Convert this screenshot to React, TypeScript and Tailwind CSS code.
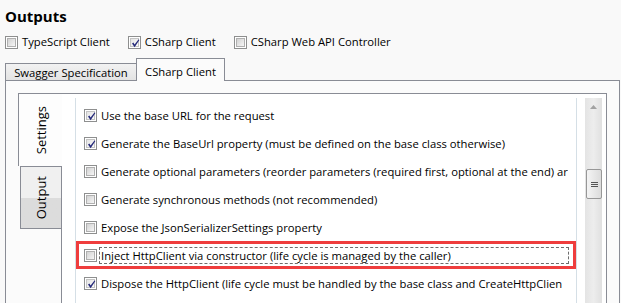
import React from "react";

function Check() {
  return (
    <svg className="absolute left-0 top-0 h-[13px] w-[13px]" viewBox="0 0 13 13">
      <path d="M3 6.6 L4.4 5.6 L5.6 7.6 L9.4 2.4 L10.4 3.1 L5.6 10.2 Z" fill="#252a7a" />
    </svg>
  );
}

function Box({ checked }: { checked?: boolean }) {
  return (
    <span className="relative flex h-[13px] w-[13px] shrink-0 border border-[#8e8f8f] bg-white p-[1px]">
      <span
        className={
          checked
            ? "block h-full w-full border border-[#c4c4c4] bg-gradient-to-br from-[#e4e4e4] to-[#fbfbfb]"
            : "block h-full w-full border border-[#b0b0b0] bg-gradient-to-br from-[#d2d2d2] to-[#f6f6f6]"
        }
      />
      {checked && <Check />}
    </span>
  );
}

const rows: { text: string; checked: boolean; focus?: boolean }[] = [
  { text: "Use the base URL for the request", checked: true },
  { text: "Generate the BaseUrl property (must be defined on the base class otherwise)", checked: true },
  {
    text: "Generate optional parameters (reorder parameters (required first, optional at the end) ar",
    checked: false,
  },
  { text: "Generate synchronous methods (not recommended)", checked: false },
  { text: "Expose the JsonSerializerSettings property", checked: false },
  { text: "Inject HttpClient via constructor (life cycle is managed by the caller)", checked: false, focus: true },
  {
    text: "Dispose the HttpClient (life cycle must be handled by the base class and CreateHttpClien",
    checked: true,
  },
];

export default function App() {
  return (
    <div className="flex h-[303px] w-[621px] flex-col overflow-hidden bg-[#f9f9f9] font-['Open_Sans',sans-serif] text-[11.25px] text-black">
      <div className="h-[31px] pl-[5px] pt-[6px] text-[15px] font-bold leading-[20px]">Outputs</div>
      <div className="flex h-[23px] items-center gap-[18px] pl-[5px]">
        <div className="flex items-center gap-[4px]">
          <Box />
          <span>TypeScript Client</span>
        </div>
        <div className="flex items-center gap-[4px]">
          <Box checked />
          <span>CSharp Client</span>
        </div>
        <div className="flex items-center gap-[4px]">
          <Box />
          <span>CSharp Web API Controller</span>
        </div>
      </div>
      <div className="mt-[4px] flex h-[22px] items-end pl-[5px]">
        <div className="flex h-[17px] w-[132px] items-center justify-center border-l border-r border-t border-[#898c95] bg-gradient-to-b from-[#f2f2f2] to-[#e3e3e3] leading-[15px]">
          Swagger Specification
        </div>
        <div className="relative z-10 -mb-[1px] -ml-[1px] flex h-[23px] w-[89px] justify-center border-l border-r border-t border-[#898c95] bg-[#fbfbfb] pt-[5px] leading-[15px]">
          CSharp Client
        </div>
      </div>
      <div className="ml-[5px] flex w-[615px] flex-1 border-l border-r border-t border-[#898c95] bg-[#fbfbfb] pl-[12px] pt-[12px]">
        <div className="flex w-[43px] shrink-0 flex-col">
          <div className="relative z-10 flex h-[73px] w-[44px] items-center justify-center border-l border-t border-[#898c95] bg-[#fdfdfd]">
            <span className="rotate-180 [writing-mode:vertical-rl] text-[13px] leading-[14px]">Settings</span>
          </div>
          <div className="ml-[2px] flex h-[63px] w-[42px] items-center justify-center border border-[#898c95] bg-gradient-to-b from-[#f0f0f0] from-50% to-[#dcdcdc] to-50%">
            <span className="rotate-180 [writing-mode:vertical-rl] text-[13px] leading-[14px]">Output</span>
          </div>
        </div>
        <div className="flex w-[546px] shrink-0 border-l border-r border-t border-[#898c95] bg-white pl-[13px] pr-[4px] pt-[4px]">
          <div className="flex w-[502px] shrink-0 flex-col border-l border-r border-[#d5dfe6] pt-[3px]">
            {rows.map((r, i) => (
              <div
                key={i}
                className={
                  r.focus
                    ? "flex h-[28px] shrink-0 items-center pl-[8px] outline outline-[3px] -outline-offset-[3px] outline-[#ef3d3d]"
                    : "flex h-[28px] shrink-0 items-center pl-[8px]"
                }
              >
                <Box checked={r.checked} />
                <span
                  className={
                    r.focus
                      ? "ml-[2px] block h-[17px] w-[470px] overflow-hidden whitespace-nowrap border border-dashed border-[#6d6d6d] px-[1px] leading-[15px]"
                      : "ml-[2px] block h-[17px] w-[470px] overflow-hidden whitespace-nowrap border border-transparent px-[1px] leading-[15px]"
                  }
                >
                  {r.text}
                </span>
              </div>
            ))}
          </div>
          <div className="ml-[8px] flex w-[17px] shrink-0 flex-col bg-gradient-to-r from-[#e4e4e4] via-[#ededed] to-[#e0e0e0]">
            <div className="flex h-[17px] items-center justify-center">
              <svg width="7" height="4" viewBox="0 0 7 4">
                <path d="M0 4 L3.5 0 L7 4 Z" fill="#a2a2a2" />
              </svg>
            </div>
            <div className="ml-[1px] mt-[54px] flex h-[30px] w-[16px] flex-col items-center justify-center gap-[1px] rounded-[2px] border border-[#979797] bg-gradient-to-r from-[#f4f4f4] to-[#dcdcdc]">
              <span className="block h-[1px] w-[7px] bg-[#555]" />
              <span className="block h-[1px] w-[7px] bg-[#555]" />
              <span className="block h-[1px] w-[7px] bg-[#555]" />
            </div>
          </div>
        </div>
      </div>
    </div>
  );
}
